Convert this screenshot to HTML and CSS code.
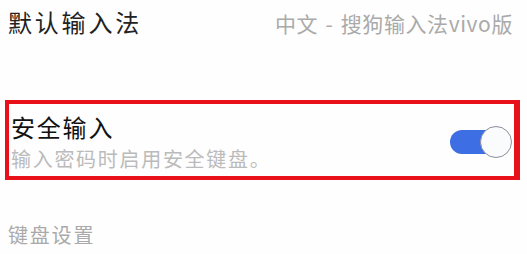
FILE: index.html
```html
<!DOCTYPE html>
<html lang="zh-CN">
<head>
<meta charset="utf-8">
<link rel="stylesheet" href="styles.css">
</head>
<body>
<div class="top">
  <span class="title">默认输入法</span>
  <span class="value">中文 - 搜狗输入法vivo版</span>
</div>
<div class="box">
  <div class="texts">
    <div class="item-title">安全输入</div>
    <div class="item-sub">输入密码时启用安全键盘。</div>
  </div>
  <div class="switch"><div class="track"></div><div class="knob"></div></div>
</div>
<div class="section">键盘设置</div>
</body>
</html>
```
FILE: styles.css
```css
html, body { margin: 0; padding: 0; background: #fefefe; }
body {
  font-family: "Noto Sans CJK SC", "Noto Sans", sans-serif;
  width: 527px; height: 254px; overflow: hidden;
}
.top {
  display: flex; justify-content: space-between; align-items: baseline;
  padding: 8px 14px 0 8px; height: 28px;
}
.title { font-size: 24px; line-height: 28px; letter-spacing: 2.8px; color: #222; }
.value { font-size: 21px; line-height: 28px; color: #aaa; letter-spacing: 0.6px; word-spacing: 2px; }
.box {
  margin: 64px 7px 0 5px;
  border: 4px solid #e8111b; border-right-width: 6px;
  display: flex; align-items: center; justify-content: space-between;
  padding: 9px 2px 5px 2px;
}
.item-title { font-size: 24px; line-height: 28px; color: #111; letter-spacing: 1.8px; }
.item-sub { font-size: 20px; line-height: 24px; margin-top: 6px; color: #bbb; letter-spacing: 1.7px; }
.switch { position: relative; width: 62px; height: 32px; }
.track {
  position: absolute; left: 0; top: 4px; width: 52px; height: 24px;
  border-radius: 12px; background: #3e6ee3;
}
.knob {
  position: absolute; right: 0; top: 0; width: 30px; height: 30px;
  border-radius: 50%; background: #fafbfd; border: 1px solid #8a8f9a;
}
.section {
  margin-top: 43px; padding-left: 8px;
  font-size: 20px; line-height: 24px; color: #aaa; letter-spacing: 1.8px;
}
```
